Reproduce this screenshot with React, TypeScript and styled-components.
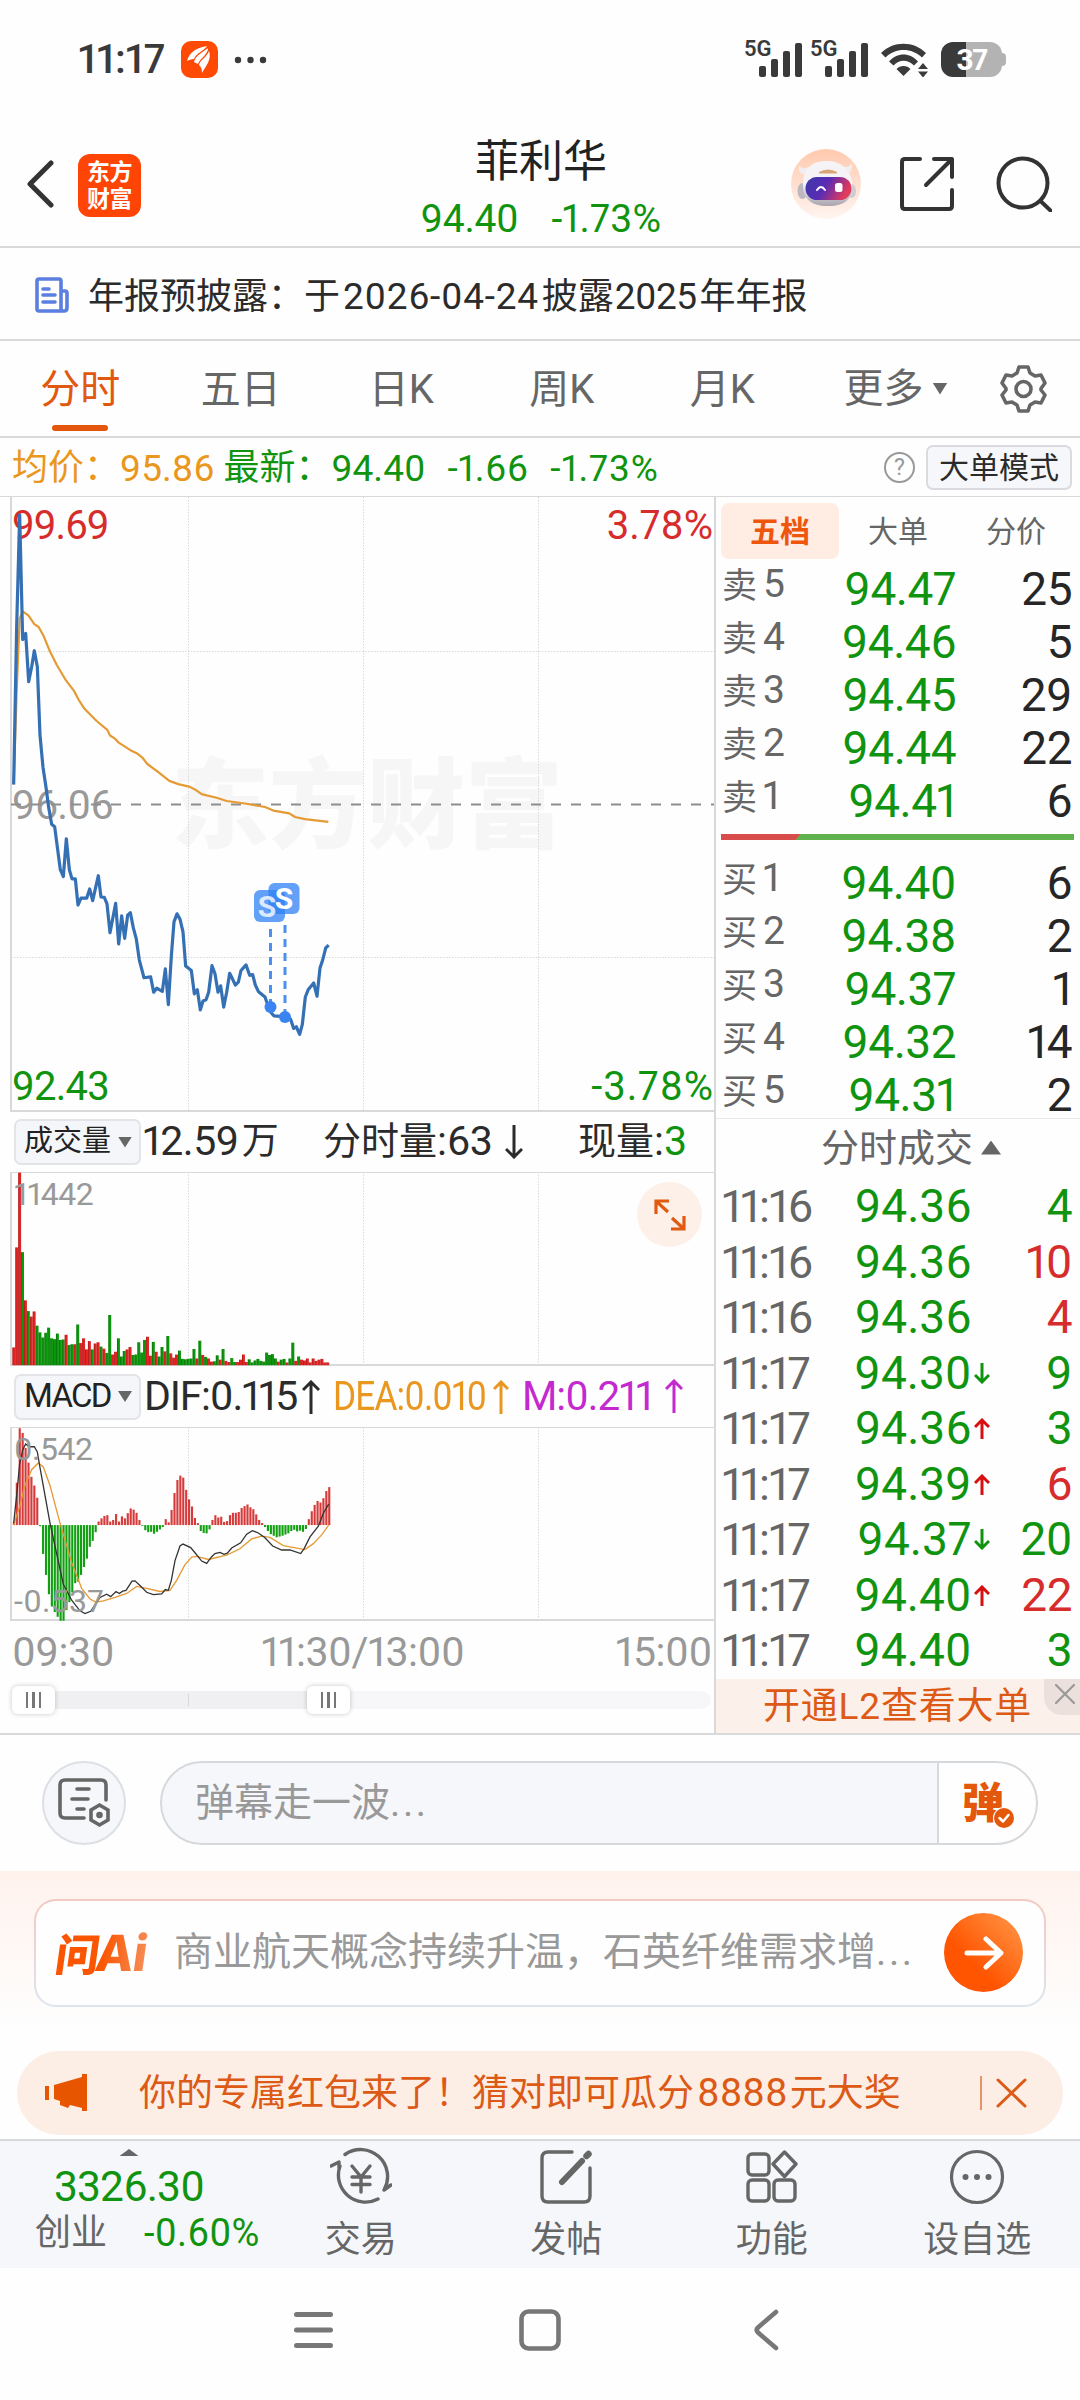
import React from "react";
import styled, { createGlobalStyle } from "styled-components";

const GREEN = "#109410";
const RED = "#d62c2c";
const INK = "#2b2b2b";
const GRAY = "#666666";
const MUTED = "#999999";
const ORANGE = "#e0590f";
const AMBER = "#ea9720";
const PURPLE = "#c429cf";
const LINE = "#d8d9db";

const Global = createGlobalStyle`
  * { box-sizing: border-box; }
  body { margin: 0; background: #fefefe; }
  svg { display: block; flex: none; }
`;

const Screen = styled.div`
  width: 1080px;
  height: 2400px;
  overflow: hidden;
  display: flex;
  flex-direction: column;
  background: #fefefe;
  color: ${INK};
  font-family: Roboto, "Noto Sans CJK SC", sans-serif;
  font-feature-settings: "pnum" 1;
  white-space: nowrap;
`;

const Txt = styled.span<{ $s: number; $c?: string; $ls?: number; $w?: number; $ml?: number; $sx?: number }>`
  font-size: ${(p) => p.$s}px;
  color: ${(p) => p.$c ?? "inherit"};
  letter-spacing: ${(p) => p.$ls ?? 0}px;
  font-weight: ${(p) => p.$w ?? 400};
  margin-left: ${(p) => p.$ml ?? 0}px;
  line-height: 1.1;
  ${(p) => p.$sx && `display: inline-block; transform: scaleX(${p.$sx}); transform-origin: left center; margin-right: -30px;`}
`;
const Dots = styled.span`
  letter-spacing: 2.6px;
`;

/* ---------- status bar ---------- */
const StatusBar = styled.div`
  height: 119px;
  display: flex;
  align-items: center;
  padding: 0 78px 0 78px;
  color: #3a3a3a;
`;
const Push = styled.div<{ $w?: number }>`
  flex: ${(p) => (p.$w ? `0 0 ${p.$w}px` : "1")};
`;
const AppBadge = styled.div`
  width: 37px;
  height: 37px;
  margin-left: 16px;
  border-radius: 10px;
  background: #ff4a05;
  display: flex;
  align-items: center;
  justify-content: center;
`;
const Signal = styled.div`
  display: flex;
  width: 66px;
  height: 40px;
`;
const Net = styled.span`
  width: 15px;
  font-size: 22px;
  line-height: 17px;
  font-weight: 600;
`;
const Battery = styled.div`
  position: relative;
  width: 61px;
  height: 35px;
  margin-left: 12px;
  border-radius: 12px;
  background: linear-gradient(90deg, #3a3a3a 25px, #b3b3b3 25px);
  color: #fff;
  font-size: 30px;
  font-weight: 700;
  line-height: 36px;
  text-align: center;
  letter-spacing: -1.5px;
  &::after {
    content: "";
    position: absolute;
    right: -4px;
    top: 11px;
    width: 4px;
    height: 13px;
    border-radius: 0 4px 4px 0;
    background: #b3b3b3;
  }
`;

/* ---------- header ---------- */
const Header = styled.header`
  height: 129px;
  border-bottom: 2px solid ${LINE};
  display: grid;
  grid-template-columns: 26px 52px 64px 1fr 70px 39px 54px 42px 54px 30px;
  align-items: center;
  padding-top: 2px;
`;
const Logo = styled.div`
  width: 63px;
  height: 63px;
  margin-top: 3px;
  border-radius: 12px;
  background: #ff4505;
  color: #fff;
  font-weight: 700;
  font-size: 23px;
  line-height: 27px;
  text-align: center;
  padding-top: 5px;
  letter-spacing: -0.5px;
`;
const TitleBox = styled.div`
  display: flex;
  flex-direction: column;
  align-items: center;
  width: 250px;
  margin-left: 274px;
  padding-top: 12px;
`;
const Quote = styled.div`
  display: flex;
  gap: 33px;
  margin-top: 12px;
`;

/* ---------- notice / tabs / info ---------- */
const Notice = styled.div`
  height: 93px;
  border-bottom: 2px solid ${LINE};
  display: flex;
  align-items: center;
  padding: 8px 0 0 35px;
`;
const NoticeIcon = styled.div`
  margin-top: -6px;
`;
const Tabs = styled.nav`
  height: 97px;
  border-bottom: 2px solid ${LINE};
  display: grid;
  grid-template-columns: repeat(5, 160.5px) 41px 156px 47px;
  align-items: stretch;
`;
const Tab = styled.div<{ $on?: boolean }>`
  display: flex;
  flex-direction: column;
  align-items: center;
  padding-top: 24px;
  font-size: 40px;
  line-height: 50px;
  color: ${(p) => (p.$on ? ORANGE : GRAY)};
  &::after {
    content: "";
    width: 56px;
    height: 6px;
    margin-top: 10px;
    border-radius: 3px;
    background: ${(p) => (p.$on ? "#e4560b" : "transparent")};
  }
`;
const More = styled.div`
  grid-column: 7;
  display: flex;
  align-items: center;
  gap: 9px;
  font-size: 40px;
  line-height: 50px;
  color: ${GRAY};
`;
const Tri = styled.i<{ $w: number; $h: number; $up?: boolean; $c?: string }>`
  display: block;
  width: ${(p) => p.$w}px;
  height: ${(p) => p.$h}px;
  background: ${(p) => p.$c ?? GRAY};
  clip-path: ${(p) => (p.$up ? "polygon(50% 0, 100% 100%, 0 100%)" : "polygon(0 0, 100% 0, 50% 100%)")};
`;
const GearBox = styled.div`
  display: flex;
  align-items: center;
`;
const Info = styled.div`
  height: 59px;
  border-bottom: 1px solid ${LINE};
  display: flex;
  align-items: center;
  padding: 0 8px 0 12px;
`;
const InfoText = styled.div`
  display: flex;
  align-items: center;
  padding-top: 4px;
`;
const Help = styled.div`
  width: 31px;
  height: 31px;
  margin-right: 11px;
  border: 2px solid ${MUTED};
  border-radius: 50%;
  color: ${MUTED};
  font-size: 23px;
  line-height: 27px;
  text-align: center;
`;
const ModeButton = styled.div`
  width: 146px;
  height: 45px;
  border: 2px solid #d9dbdf;
  border-radius: 7px;
  background: #f6f7fa;
  font-size: 30px;
  line-height: 42px;
  text-align: center;
`;

/* ---------- main ---------- */
const Main = styled.main`
  display: grid;
  grid-template-columns: 716px 364px;
  height: 1238px;
  border-bottom: 2px solid ${LINE};
`;
const Left = styled.section`
  border-right: 2px solid ${LINE};
  display: flex;
  flex-direction: column;
`;
const Plot = styled.div<{ $h: number }>`
  position: relative;
  height: ${(p) => p.$h}px;
`;
const PlotSvg = styled.svg`
  position: relative;
`;
const Tag = styled.span<{ $x?: number; $r?: number; $y: number; $s: number; $c: string; $ls?: number }>`
  position: absolute;
  ${(p) => (p.$r === undefined ? `left: ${p.$x}px;` : `right: ${p.$r}px;`)}
  top: ${(p) => p.$y}px;
  font-size: ${(p) => p.$s}px;
  line-height: 1;
  color: ${(p) => p.$c};
  letter-spacing: ${(p) => p.$ls ?? -0.5}px;
`;
const Watermark = styled.span`
  position: absolute;
  left: 171px;
  top: 244px;
  font-family: "Noto Sans CJK SC", sans-serif;
  font-size: 98px;
  font-weight: 900;
  line-height: 112px;
  color: #f6f6f6;
`;
const IndicatorRow = styled.div<{ $h: number; $cols: string }>`
  height: ${(p) => p.$h}px;
  display: grid;
  grid-template-columns: ${(p) => p.$cols};
  align-items: center;
  padding-left: 14px;
`;
const Picker = styled.div`
  width: 127px;
  height: 46px;
  border: 2px solid #e3e4e8;
  border-radius: 7px;
  background: #f5f6f9;
  display: flex;
  align-items: center;
  justify-content: space-between;
  padding: 0 7px 0 8px;
  color: #222;
`;
const Cell = styled.div<{ $c?: string }>`
  display: flex;
  align-items: center;
  color: ${(p) => p.$c ?? INK};
`;
const Expand = styled.div`
  position: absolute;
  left: 637px;
  top: 10px;
  width: 65px;
  height: 65px;
  border-radius: 50%;
  background: #fdf0e9;
  display: flex;
  align-items: center;
  justify-content: center;
`;
const Axis = styled.div`
  height: 60px;
  display: flex;
  justify-content: space-between;
  align-items: center;
  padding: 1px 2px 0 12px;
  color: ${MUTED};
  font-size: 41px;
  letter-spacing: -0.4px;
`;
const AxisMid = styled.span`
  margin-left: -4px;
`;
const Slider = styled.div`
  position: relative;
  height: 18px;
  margin: 10px 3px 0 12px;
  border-radius: 9px;
  background: linear-gradient(90deg, #f0f0f3 320px, #f7f7fa 320px);
`;
const Tick = styled.div`
  width: 1px;
  height: 12px;
  position: absolute;
  top: 3px;
  left: 176px;
  background: ${LINE};
`;
const Knob = styled.div<{ $x: number }>`
  position: absolute;
  left: ${(p) => p.$x}px;
  top: -5px;
  width: 43px;
  height: 28px;
  border-radius: 6px;
  background: #fff;
  box-shadow: 0 0 5px rgba(0, 0, 0, 0.22);
  display: flex;
  gap: 4px;
  align-items: center;
  justify-content: center;
`;
const Bar = styled.i`
  width: 2.5px;
  height: 16px;
  background: #777;
`;

/* ---------- order book ---------- */
const Right = styled.section`
  display: flex;
  flex-direction: column;
`;
const BookTabs = styled.div`
  display: grid;
  grid-template-columns: repeat(3, 118px);
  padding: 6px 0 0 5px;
  height: 66px;
`;
const BookTab = styled.div<{ $on?: boolean }>`
  height: 56px;
  border-radius: 8px;
  background: ${(p) => (p.$on ? "#ffece3" : "transparent")};
  color: ${(p) => (p.$on ? "#ee560c" : GRAY)};
  font-weight: ${(p) => (p.$on ? 700 : 400)};
  font-size: 30px;
  line-height: 57px;
  text-align: center;
`;
const BookRow = styled.div`
  height: 53px;
  display: grid;
  grid-template-columns: 90px 144px 116px;
  padding-left: 6px;
  line-height: 53px;
`;
const Side = styled.div`
  display: flex;
  gap: 6px;
  color: ${GRAY};
  font-size: 35px;
  line-height: 48px;
`;
const Num = styled.div<{ $c?: string; $ls?: number }>`
  text-align: right;
  font-size: 46px;
  letter-spacing: ${(p) => p.$ls ?? -0.5}px;
  color: ${(p) => p.$c ?? "#262626"};
`;
const Ratio = styled.div`
  height: 6px;
  margin: 6px 6px 17px 5px;
  background: linear-gradient(128deg, #d94c4c 62px, #5fb24e 63px);
`;
const TradesHead = styled.div`
  height: 61px;
  margin-top: -4px;
  border-top: 1px solid #e6e7e9;
  display: flex;
  align-items: center;
  gap: 8px;
  padding: 0 0 3px 105px;
  font-size: 38px;
  line-height: 50px;
  color: ${GRAY};
`;
const TradeRow = styled.div`
  height: 55.5px;
  line-height: 55.5px;
  display: grid;
  grid-template-columns: 98px 151.5px 18.5px 82px;
  padding-left: 6px;
  align-items: center;
`;
const TimeCell = styled.div`
  font-size: 45px;
  letter-spacing: -1px;
  color: ${GRAY};
`;
const L2 = styled.div`
  position: relative;
  height: 54px;
  background: #fcf0ea;
  color: #dc5a16;
  font-size: 37px;
  letter-spacing: 0.8px;
  line-height: 55px;
  padding-left: 47px;
`;
const L2Close = styled.div`
  position: absolute;
  right: 0;
  top: 0;
  width: 36px;
  height: 36px;
  border-radius: 0 0 0 18px;
  background: #ebe0db;
  padding: 5px 0 0 11px;
`;

/* ---------- comment bar ---------- */
const Comment = styled.div`
  height: 136px;
  display: flex;
  align-items: center;
  padding: 0 42px;
  gap: 34px;
`;
const RoundBtn = styled.div`
  width: 84px;
  height: 84px;
  border-radius: 50%;
  border: 2px solid #dcdfe4;
  background: #f6f7fa;
  display: flex;
  align-items: center;
  justify-content: center;
`;
const Input = styled.div`
  width: 878px;
  height: 84px;
  border-radius: 42px;
  border: 2px solid #d6d9dc;
  background: linear-gradient(90deg, #f6f7fa 775px, ${LINE} 775px, ${LINE} 777px, #fefefe 777px);
  display: flex;
  align-items: center;
  justify-content: space-between;
  padding: 0 18px 0 33px;
`;
const DanIcon = styled.div`
  position: relative;
  width: 56px;
  height: 56px;
  font-family: "Noto Sans CJK SC", sans-serif;
  font-size: 42px;
  font-weight: 900;
  line-height: 49px;
  color: #e4580c;
`;
const DanCheck = styled.div`
  position: absolute;
  right: 3px;
  bottom: 2px;
  border-radius: 50%;
  background: #fefefe;
`;

/* ---------- AI ---------- */
const AiArea = styled.div`
  height: 180px;
  padding: 28px 34px 0;
  background: linear-gradient(180deg, #fff2ed, #fefefe 160px);
`;
const AiCard = styled.div`
  height: 108px;
  border-radius: 22px;
  border: 2px solid transparent;
  background: linear-gradient(#fefefe, #fefefe) padding-box,
    linear-gradient(180deg, #f3c9c1, #dde5ef) border-box;
  display: grid;
  grid-template-columns: 118px 1fr 79px;
  align-items: center;
  padding: 0 21px 1px 20px;
`;
const AiLogo = styled.div`
  transform: skewX(-8deg);
  transform-origin: left center;
  width: 100px;
  font-family: "Noto Sans CJK SC", sans-serif;
  font-weight: 900;
  font-size: 44px;
  line-height: 50px;
  background: linear-gradient(90deg, #fa5500 45px, #f7925f 96px);
  background-clip: text;
  -webkit-background-clip: text;
  color: transparent;
`;
const AiLatin = styled.span`
  font-family: Inter, sans-serif;
  font-weight: 800;
  font-size: 50px;
  letter-spacing: -1px;
  margin-left: -4px;
`;
const Go = styled.div`
  width: 79px;
  height: 79px;
  border-radius: 50%;
  background: linear-gradient(45deg, #ff5400 35%, #ff9a4a);
  display: flex;
  align-items: center;
  justify-content: center;
`;

/* ---------- promo ---------- */
const Promo = styled.div`
  height: 84px;
  margin: 0 17px 4px;
  border-radius: 42px;
  background: #fceee5;
  color: #dc5a16;
  display: grid;
  grid-template-columns: 94px 1fr 16px 31px;
  align-items: center;
  padding: 0 36px 0 28px;
`;
const Sep = styled.div`
  width: 1.5px;
  height: 34px;
  background: #e39468;
`;

/* ---------- bottom nav ---------- */
const Dock = styled.div`
  height: 129px;
  border-top: 2px solid ${LINE};
  background: #f6f7fa;
  display: grid;
  grid-template-columns: 258px repeat(4, 205.5px);
`;
const Index = styled.div`
  display: flex;
  flex-direction: column;
  align-items: center;
  padding-top: 8px;
`;
const IndexValue = styled.div`
  margin-top: 7px;
  font-size: 42.5px;
  letter-spacing: -0.8px;
  line-height: 48px;
  color: ${GREEN};
`;
const IndexSub = styled.div`
  display: flex;
  align-items: center;
  align-self: flex-start;
  margin-top: 2px;
  padding-left: 35px;
`;
const DockItem = styled.div`
  display: flex;
  flex-direction: column;
  align-items: center;
  padding-top: 6px;
  font-size: 36px;
  line-height: 46px;
  color: ${GRAY};
  gap: 10px;
`;
const SysNav = styled.div`
  flex: 1;
  display: grid;
  grid-template-columns: 39px 42px 25px;
  column-gap: 186px;
  padding: 41px 0 0 294px;
`;
const BackSlot = styled.div`
  padding-left: 6px;
`;

/* ---------- icons ---------- */
const Glyph = ({ w, h, sw = 4, c = GRAY, children }: { w: number; h: number; sw?: number; c?: string; children: React.ReactNode }) => (
  <svg width={w} height={h} viewBox={`0 0 ${w} ${h}`} fill="none" stroke={c} strokeWidth={sw} strokeLinecap="round" strokeLinejoin="round">
    {children}
  </svg>
);

const SignalIcon = () => (
  <Signal>
    <Net>5G</Net>
    <svg width="44" height="38" viewBox="0 0 44 38" fill="#3a3a3a">
      <rect x="0" y="26" width="7" height="11" rx="2" />
      <rect x="12" y="19" width="7" height="18" rx="2" />
      <rect x="24" y="11" width="7" height="26" rx="2" />
      <rect x="36" y="3" width="7" height="34" rx="2" />
    </svg>
  </Signal>
);

const WifiIcon = () => (
  <svg width="48" height="34" viewBox="0 0 48 34" fill="#3a3a3a">
    <path d="M0 10C12-2.500 33-2.500 45 10L41 14.500C31 4.500 14 4.500 4.500 14.500Z" />
    <path d="M8 18.500C16 9 29 9 37 18.500L33 22.500C27 16 18 16 12.500 22.500Z" />
    <path d="M15.500 26C19 22 26 22 29.500 26L22.500 33Z" />
    <path d="M42 20L47 26H37Z M42 34.500L47 28.500H37Z" />
  </svg>
);

const Robot = () => (
  <svg width="70" height="70" viewBox="0 0 70 70">
    <defs>
      <linearGradient id="rb" x1="0" y1="0" x2="0" y2="1">
        <stop offset="0" stopColor="#ffc9ae" />
        <stop offset="1" stopColor="#fff5f0" />
      </linearGradient>
      <linearGradient id="vz" x1="0" y1="0" x2="1" y2="0.300">
        <stop offset="0" stopColor="#3a3ba8" />
        <stop offset="0.500" stopColor="#5a2bb4" />
        <stop offset="1" stopColor="#e03a5c" />
      </linearGradient>
      <linearGradient id="hd" x1="0" y1="0" x2="0" y2="1">
        <stop offset="0.500" stopColor="#f6f3f6" />
        <stop offset="1" stopColor="#a9a4ae" />
      </linearGradient>
    </defs>
    <circle cx="35" cy="35" r="35" fill="url(#rb)" />
    <path d="M8 16C7 24 11 27 16 24L20 17C14 20 10 20 8 16ZM61 14C62 22 58 26 54 24L49 17C55 19 59 18 61 14Z" fill="#f1edf0" />
    <ellipse cx="11.500" cy="42" rx="5" ry="8" fill="#bcb8c1" />
    <ellipse cx="61" cy="42" rx="4" ry="7" fill="#cfcbd2" />
    <path d="M12 33C13 18 22 12 36 12S59 20 61 33C63 49 55 57 37 57S11 49 12 33Z" fill="url(#hd)" />
    <path d="M28 23Q37 18 46 23V24.500H28Z" fill="#d8a577" />
    <rect x="14.500" y="28" width="46" height="23" rx="11.500" fill="url(#vz)" />
    <path d="M26 41Q30 35 34 41" stroke="#fff" strokeWidth="2" fill="none" strokeLinecap="round" />
    <rect x="44" y="34" width="7.500" height="9" rx="2.500" fill="#fff" />
  </svg>
);

const Arrow = ({ up, c, w = 18, h = 34, sw = 3 }: { up?: boolean; c: string; w?: number; h?: number; sw?: number }) => (
  <svg width={w} height={h} viewBox={`0 0 ${w} ${h}`} fill="none" stroke={c} strokeWidth={sw}>
    {up ? (
      <path d={`M${w / 2} ${h}V2M1 ${w / 2 + 1}L${w / 2} 2L${w - 1} ${w / 2 + 1}`} />
    ) : (
      <path d={`M${w / 2} 0V${h - 2}M1 ${h - w / 2 - 1}L${w / 2} ${h - 2}L${w - 1} ${h - w / 2 - 1}`} />
    )}
  </svg>
);

/* ---------- chart data ---------- */
const price =
  "41,733 50,340 59,62 68,372 77,357 86,477 95,440 103,400 112,440 120,610 129,690 138,740 146,790 155,832 164,838 173,895 181,945 190,962 199,868 208,945 216,968 226,968 234,1033 243,1016 260,1016 269,993 278,1022 295,960 303,1013 313,1014 321,1030 330,1102 347,1029 356,1130 365,1060 374,1116 383,1058 391,1052 400,1090 409,1118 418,1170 432,1214 452,1212 461,1250 470,1240 487,1248 496,1192 505,1281 514,1160 522,1075 531,1055 540,1068 549,1100 557,1185 574,1196 583,1254 592,1244 601,1294 609,1272 618,1269 626,1250 636,1184 645,1204 654,1250 662,1234 671,1287 680,1250 689,1203 697,1216 706,1232 715,1225 723,1196 738,1182 749,1208 758,1206 766,1232 775,1248 795,1262 810,1298 822,1309 840,1310 862,1305 872,1318 881,1340 889,1336 899,1355 907,1330 916,1262 925,1243 941,1227 951,1260 960,1190 968,1170 977,1140 986,1133";
const average =
  "41,733 50,500 59,320 68,302 85,312 103,334 116,341 130,362 150,402 170,435 198,474 222,500 236,522 252,543 290,575 322,597 330,611 345,619 355,628 390,647 410,655 428,667 442,682 475,702 508,724 535,732 570,739 590,748 605,757 650,766 680,774 740,781 795,789 820,798 868,805 885,814 915,819 985,826";
const dif =
  "41,1070 50,1000 59,920 68,885 77,870 88,877 103,877 112,890 120,930 150,1070 190,1225 215,1265 240,1292 255,1299 272,1293 300,1258 320,1250 332,1256 348,1243 358,1248 368,1242 378,1240 396,1217 405,1216 420,1228 440,1245 460,1251 485,1249 496,1238 505,1240 514,1215 525,1165 540,1128 549,1123 572,1132 585,1145 605,1166 620,1172 635,1155 645,1147 660,1144 672,1149 682,1146 695,1133 722,1120 740,1098 757,1089 775,1095 795,1107 818,1128 845,1138 870,1138 902,1147 912,1135 930,1105 955,1078 970,1045 986,1022";
const dea =
  "41,1075 59,1028 75,975 95,935 115,918 130,928 150,975 180,1070 215,1170 245,1235 270,1262 288,1270 310,1267 345,1258 380,1248 410,1230 440,1235 480,1243 510,1240 530,1215 555,1175 575,1156 590,1154 625,1162 680,1151 720,1135 755,1110 785,1103 810,1106 850,1127 915,1137 940,1122 965,1100 986,1075";
const volume =
  "627R 374R 185R 386G 508R 535G 549R 536R 572G 589G 602G 590G 577G 604G 606G 592G 608G 607G 595R 621G 619G 619R 569G 616R 604R 632R 611R 632G 617R 614R 625G 630R 641G 545G 645R 638R 604G 650G 636G 632R 626R 646G 645G 614G 640G 608G 600R 648R 613G 638R 650G 626G 637R 598G 642R 653R 645R 635G 656G 657G 656G 655G 631G 655R 610G 646R 651G 655R 663R 662G 647G 658R 631G 661R 664R 654G 664G 664R 658R 645R 664R 657G 665G 660G 656G 661G 663G 640G 646G 644G 655G 663R 658G 656G 665R 655G 615G 661R 650G 658R 660R 655R 665R 655R 661R 658R 656R 665R 665R".split(" ");
const macd = [
  1068, 968, 830, 842, 880, 917, 953, 975, 1006, 1078, 1148, 1201, 1250, 1281, 1295, 1307, 1317, 1317, 1290, 1270, 1245, 1222, 1218, 1201, 1181, 1160, 1130, 1115,
  1093, 1066, 1058, 1052, 1050, 1066, 1062, 1047, 1066, 1053, 1058, 1045, 1033, 1036, 1044, 1062, 1077, 1088, 1093, 1092, 1097, 1092, 1086, 1080, 1060, 1068, 1037,
  994, 961, 950, 955, 986, 1010, 1028, 1057, 1070, 1090, 1095, 1096, 1086, 1062, 1050, 1056, 1054, 1067, 1065, 1050, 1044, 1044, 1042, 1032, 1027, 1023, 1030, 1035,
  1048, 1062, 1070, 1080, 1090, 1098, 1102, 1106, 1104, 1102, 1099, 1096, 1090, 1087, 1091, 1089, 1092, 1085, 1060, 1040, 1024, 1014, 1018, 1007, 989, 979,
];

const Frame = ({ h, rows = [] as number[] }: { h: number; rows?: number[] }) => (
  <g stroke={LINE} fill="none">
    <path d={`M714 ${h - 1}H11V0`} strokeWidth="2" />
    {[188.5, 363.5, 538.5].map((x) => (
      <path key={x} d={`M${x} 0V${h}`} strokeDasharray="1.500 1.500" />
    ))}
    {rows.map((y) => (
      <path key={y} d={`M11 ${y}H714`} strokeDasharray="1.500 1.500" />
    ))}
  </g>
);

const PriceChart = () => (
  <Plot $h={615}>
    <Watermark>东方财富</Watermark>
    <Tag $x={12} $y={9} $s={40} $c={RED} $ls={-1.1}>99.69</Tag>
    <Tag $r={1} $y={9} $s={40} $c={RED} $ls={0}>3.78%</Tag>
    <Tag $x={12} $y={288} $s={41} $c={MUTED} $ls={-0.8}>96.06</Tag>
    <Tag $x={12} $y={570} $s={40} $c={GREEN} $ls={-0.8}>92.43</Tag>
    <Tag $r={0} $y={570} $s={40} $c={GREEN} $ls={0.9}>-3.78%</Tag>
    <PlotSvg width="714" height="615" viewBox="0 0 714 615">
      <Frame h={615} rows={[154.5, 460.5]} />
      <path d="M11 307.500H714" stroke="#8d8d8d" strokeWidth="2" strokeDasharray="10 10" />
      <g transform="translate(0,-7) scale(0.33333,0.40177)" fill="none" strokeLinejoin="round">
        <polyline points={average} stroke="#e59a33" strokeWidth="2.200" vectorEffect="non-scaling-stroke" />
        <polyline points={price} stroke="#3570b5" strokeWidth="3.200" vectorEffect="non-scaling-stroke" />
      </g>
      <g stroke="#4c8ff2" strokeWidth="3" strokeDasharray="8 6">
        <path d="M270.500 432V508M285 428V516" />
      </g>
      <circle cx="270.500" cy="510" r="6" fill="#3a84f2" />
      <circle cx="285" cy="520" r="6" fill="#3a84f2" />
      <g fill="#2f80f5" fillOpacity="0.750">
        <rect x="254" y="393" width="31" height="32" rx="6" />
        <rect x="268.500" y="386" width="31" height="31" rx="6" />
      </g>
      <g fill="#fff" fontFamily="Roboto, sans-serif" fontWeight="700" fontSize="30" textAnchor="middle">
        <text x="267" y="420" fillOpacity="0.800">S</text>
        <text x="284" y="412">S</text>
      </g>
    </PlotSvg>
  </Plot>
);

const VolumeChart = () => (
  <Plot $h={194}>
    <svg width="714" height="194" viewBox="0 0 714 194">
      <path d="M11 0.500H714" stroke={LINE} />
      <Frame h={194} />
      <g transform="translate(0,-72.500) scale(0.33333,0.39541)">
        {volume.map((v, i) => {
          const top = parseInt(v, 10);
          return <rect key={i} x={37 + i * 8.72} y={top} width="8.900" height={672 - top} fill={v.endsWith("R") ? "#e32424" : "#0c970c"} />;
        })}
        {volume.map((v, i) => {
          const top = parseInt(v, 10);
          return <rect key={i} x={37 + i * 8.72} y={top} width="3" height={672 - top} fillOpacity="0.180" />;
        })}
      </g>
    </svg>
    <Tag $x={14} $y={6} $s={32} $c={MUTED}>11442</Tag>
    <Expand>
      <Glyph w={32} h={32} sw={3.2} c="#e05a10">
        <path strokeLinecap="butt" strokeLinejoin="miter" d="M2 15V2H15M2 2L14 13M30 17V30H17M30 30L18 19" />
      </Glyph>
    </Expand>
  </Plot>
);

const MacdChart = () => (
  <Plot $h={194}>
    <svg width="714" height="194" viewBox="0 0 714 194">
      <path d="M11 0.500H714" stroke={LINE} />
      <Frame h={194} />
      <g transform="translate(0,-327) scale(0.33333,0.39541)" fill="none">
        {macd.map((y, i) => (
          <rect key={i} x={38.5 + i * 8.76} y={Math.min(y, 1075)} width="6.400" height={Math.abs(y - 1075)} fill={y < 1075 ? "#d63a3a" : "#12a012"} />
        ))}
        <polyline points={dea} stroke="#e59a33" strokeWidth="1.300" vectorEffect="non-scaling-stroke" />
        <polyline points={dif} stroke="#333" strokeWidth="1.300" vectorEffect="non-scaling-stroke" />
      </g>
    </svg>
    <Tag $x={14} $y={6} $s={32} $c={MUTED}>0.542</Tag>
    <Tag $x={14} $y={158} $s={32} $c={MUTED} $ls={0.3}>-0.537</Tag>
  </Plot>
);

const asks = [["5", "94.47", "25"], ["4", "94.46", "5"], ["3", "94.45", "29"], ["2", "94.44", "22"], ["1", "94.41", "6"]];
const bids = [["1", "94.40", "6"], ["2", "94.38", "2"], ["3", "94.37", "1"], ["4", "94.32", "14"], ["5", "94.31", "2"]];
const trades: [string, string, number, string, string][] = [
  ["11:16", "94.36", 0, "4", GREEN],
  ["11:16", "94.36", 0, "10", RED],
  ["11:16", "94.36", 0, "4", RED],
  ["11:17", "94.30", -1, "9", GREEN],
  ["11:17", "94.36", 1, "3", GREEN],
  ["11:17", "94.39", 1, "6", RED],
  ["11:17", "94.37", -1, "20", GREEN],
  ["11:17", "94.40", 1, "22", RED],
  ["11:17", "94.40", 0, "3", GREEN],
];

const Level = ({ side, row }: { side: string; row: string[] }) => (
  <BookRow>
    <Side>
      {side}
      <Txt $s={39}>{row[0]}</Txt>
    </Side>
    <Num $c={GREEN}>{row[1]}</Num>
    <Num>{row[2]}</Num>
  </BookRow>
);

export default function App() {
  return (
    <Screen>
      <Global />
      <StatusBar>
        <Txt $s={41} $w={500} $ls={-0.4}>11:17</Txt>
        <AppBadge>
          <svg width="26" height="28" viewBox="0 0 26 28" fill="#fff">
            <path d="M1 15C3 8 8 2 21 0C18 5 10 7 8 13C5 13 3 14 1 15ZM8 16C10 9 16 7 22 2C22 9 14 12 12 18ZM13 19C14 14 21 11 23 5C26 13 20 20 16 27C16 23 15 21 13 19Z" />
          </svg>
        </AppBadge>
        <Glyph w={49} h={8} sw={0}>
          <g fill="#3a3a3a">
            <circle cx="20" cy="4" r="3.200" />
            <circle cx="32.500" cy="4" r="3.200" />
            <circle cx="45" cy="4" r="3.200" />
          </g>
        </Glyph>
        <Push />
        <SignalIcon />
        <SignalIcon />
        <Push $w={5} />
        <WifiIcon />
        <Battery>37</Battery>
      </StatusBar>

      <Header>
        <i />
        <Glyph w={28} h={48} sw={5} c="#333">
          <path d="M25 3L4 24L25 45" />
        </Glyph>
        <Logo>东方<br />财富</Logo>
        <TitleBox>
          <Txt $s={44} $c="#222">菲利华</Txt>
          <Quote>
            <Txt $s={39} $c={GREEN} $ls={-0.3}>94.40</Txt>
            <Txt $s={39} $c={GREEN} $ls={0.2}>-1.73%</Txt>
          </Quote>
        </TitleBox>
        <Robot />
        <i />
        <Glyph w={54} h={54} sw={4} c="#333">
          <path d="M20 2H5Q2 2 2 5V49Q2 52 5 52H49Q52 52 52 49V33M34 2H52V20M51 3L26 28" />
        </Glyph>
        <i />
        <Glyph w={56} h={56} sw={4} c="#333">
          <circle cx="27" cy="27" r="24.500" />
          <path d="M44.500 45L55 55" />
        </Glyph>
      </Header>

      <Notice>
        <NoticeIcon>
          <Glyph w={34} h={36} sw={3.6} c="#5a7fe0">
            <path d="M26 34V4Q26 2 24 2H4Q2 2 2 4V32Q2 34 4 34H29Q32 34 32 31V16Q32 14 30 14H26M8 12H14M8 18H20M8 25H20" />
          </Glyph>
        </NoticeIcon>
        <Txt $s={36} $ml={19}>年报预披露：于</Txt>
        <Txt $s={37} $ml={3} $ls={0.7}>2026-04-24</Txt>
        <Txt $s={36} $ml={3}>披露</Txt>
        <Txt $s={37} $ml={1} $ls={-0.5}>2025</Txt>
        <Txt $s={36} $ml={3}>年年报</Txt>
      </Notice>

      <Tabs>
        <Tab $on>分时</Tab>
        <Tab>五日</Tab>
        <Tab>日K</Tab>
        <Tab>周K</Tab>
        <Tab>月K</Tab>
        <More>
          更多
          <Tri $w={15} $h={12} />
        </More>
        <GearBox>
          <Glyph w={47} h={48} sw={3.6}>
            <path d="M19 2H28L30 8L35 11L41 10L45 18L41 23.500V25L45 30L41 38L35 37L30 40L28 46H19L17 40L12 37L6 38L2 30L6 25V23.500L2 18L6 10L12 11L17 8Z" />
            <circle cx="23.500" cy="24" r="7.500" />
          </Glyph>
        </GearBox>
      </Tabs>

      <Info>
        <InfoText>
          <Txt $s={36} $c={AMBER}>均价：</Txt>
          <Txt $s={37} $c={AMBER}>95.86</Txt>
          <Txt $s={36} $c={GREEN} $ml={9}>最新：</Txt>
          <Txt $s={37} $c={GREEN}>94.40</Txt>
          <Txt $s={37} $c={GREEN} $ml={22} $ls={0.5}>-1.66</Txt>
          <Txt $s={37} $c={GREEN} $ml={22} $ls={0.9}>-1.73%</Txt>
        </InfoText>
        <Push />
        <Help>?</Help>
        <ModeButton>大单模式</ModeButton>
      </Info>

      <Main>
        <Left>
          <PriceChart />
          <IndicatorRow $h={60} $cols="129px 180px 255px 1fr">
            <Picker>
              <Txt $s={29}>成交量</Txt>
              <Tri $w={14} $h={11} />
            </Picker>
            <Cell>
              <Txt $s={41} $ls={-0.5}>12.59</Txt>
              <Txt $s={37} $ml={3}>万</Txt>
            </Cell>
            <Cell>
              <Txt $s={38}>分时量</Txt>
              <Txt $s={41} $ls={-0.3}>:63</Txt>
              <Push $w={12} />
              <Arrow c={INK} />
            </Cell>
            <Cell>
              <Txt $s={38}>现量</Txt>
              <Txt $s={41}>:</Txt>
              <Txt $s={41} $c={GREEN}>3</Txt>
            </Cell>
          </IndicatorRow>
          <VolumeChart />
          <IndicatorRow $h={61} $cols="130px 189px 189px 1fr">
            <Picker>
              <Txt $s={33} $ls={-1.7}>MACD</Txt>
              <Tri $w={14} $h={11} />
            </Picker>
            <Cell>
              <Txt $s={41} $ls={-1.2}>DIF:0.115</Txt>
              <Push />
              <Arrow up c={INK} />
              <Push $w={13} />
            </Cell>
            <Cell $c={AMBER}>
              <Txt $s={41} $ls={-1} $sx={0.86}>DEA:0.010</Txt>
              <Push />
              <Arrow up c={AMBER} w={16} />
              <Push $w={13} />
            </Cell>
            <Cell $c={PURPLE}>
              <Txt $s={40.5} $ls={-1}>M:0.211</Txt>
              <Push $w={13} />
              <Arrow up c={PURPLE} />
            </Cell>
          </IndicatorRow>
          <MacdChart />
          <Axis>
            <span>09:30</span>
            <AxisMid>11:30/13:00</AxisMid>
            <span>15:00</span>
          </Axis>
          <Slider>
            <Tick />
            <Knob $x={0}><Bar /><Bar /><Bar /></Knob>
            <Knob $x={295}><Bar /><Bar /><Bar /></Knob>
          </Slider>
        </Left>
        <Right>
          <BookTabs>
            <BookTab $on>五档</BookTab>
            <BookTab>大单</BookTab>
            <BookTab>分价</BookTab>
          </BookTabs>
          {asks.map((r) => <Level key={r[0]} side="卖" row={r} />)}
          <Ratio />
          {bids.map((r) => <Level key={r[0]} side="买" row={r} />)}
          <TradesHead>
            分时成交
            <Tri $up $w={20} $h={14} />
          </TradesHead>
          {trades.map(([t, p, d, q, c], i) => (
            <TradeRow key={i}>
              <TimeCell>{t}</TimeCell>
              <Num $c={GREEN} $ls={0}>{p}</Num>
              <Cell>
                {d !== 0 && (
                  <>
                    <Push $w={2} />
                    <Arrow up={d > 0} c={d > 0 ? "#d60f0f" : GREEN} w={16} h={21} />
                  </>
                )}
              </Cell>
              <Num $c={c}>{q}</Num>
            </TradeRow>
          ))}
          <L2>
            开通L2查看大单
            <L2Close>
              <Glyph w={20} h={20} sw={2.2} c="#999">
                <path d="M1 1L19 19M19 1L1 19" />
              </Glyph>
            </L2Close>
          </L2>
        </Right>
      </Main>

      <Comment>
        <RoundBtn>
          <Glyph w={52} h={50} sw={3.6}>
            <path d="M26 40H7Q2 40 2 35V7Q2 2 7 2H43Q48 2 48 7V22M19 11H31M14 21H30M19 31H26" />
            <path strokeLinejoin="miter" d="M41.500 27L50 32V42L41.500 47L33 42V32Z" />
            <circle cx="41.500" cy="37" r="1.500" />
          </Glyph>
        </RoundBtn>
        <Input>
          <Txt $s={39} $c={MUTED}>弹幕走一波<Dots>...</Dots></Txt>
          <DanIcon>
            弹
            <DanCheck>
              <Glyph w={22} h={22} sw={2.5} c="#fff">
                <circle cx="11" cy="11" r="10" fill="#e4580c" stroke="none" />
                <path d="M6.500 11L10 14.500L15.500 8" />
              </Glyph>
            </DanCheck>
          </DanIcon>
        </Input>
      </Comment>

      <AiArea>
        <AiCard>
          <AiLogo>问<AiLatin>Ai</AiLatin></AiLogo>
          <Txt $s={39} $c={MUTED}>商业航天概念持续升温，石英纤维需求增<Dots>...</Dots></Txt>
          <Go>
            <Glyph w={40} h={34} sw={5} c="#fff">
              <path d="M3 17H36M22 3L37 17L22 31" />
            </Glyph>
          </Go>
        </AiCard>
      </AiArea>

      <Promo>
        <svg width="42" height="38" viewBox="0 0 42 38" fill="#e85500">
          <path d="M0 12H4V26H0ZM9 11L37 3V0H42V37H37V34L25 31L23 34L15 31V27L9 25Z" />
        </svg>
        <Txt $s={37}>你的专属红包来了！猜对即可瓜分<Txt $s={39} $ml={3}>8888</Txt><Txt $s={37} $ml={2}>元大奖</Txt></Txt>
        <Sep />
        <Glyph w={31} h={30} sw={3} c="#dc5a16">
          <path d="M2 2L29 28M29 2L2 28" />
        </Glyph>
      </Promo>

      <Dock>
        <Index>
          <Tri $up $w={19} $h={7} />
          <IndexValue>3326.30</IndexValue>
          <IndexSub>
            <Txt $s={36} $c={GRAY}>创业</Txt>
            <Txt $s={38} $c={GREEN} $ml={37} $ls={0.2}>-0.60%</Txt>
          </IndexSub>
        </Index>
        <DockItem>
          <Glyph w={62} h={60} sw={3.4}>
            <path d="M15 7.500A27 27 0 0 1 54 43L61 38M10 19A27 27 0 0 0 48 52M1 19L9 15V21" />
            <path d="M22 19L31 30L40 19M31 30V45M22 30H40M22 37.500H40" />
          </Glyph>
          交易
        </DockItem>
        <DockItem>
          <Glyph w={54} h={60} sw={3.4}>
            <path d="M33 5H9Q3 5 3 11V49Q3 55 9 55H45Q51 55 51 49V21" />
            <path d="M23 35L43 14" strokeWidth="6" />
            <path d="M47.500 9L49.500 7" strokeWidth="6.500" />
          </Glyph>
          发帖
        </DockItem>
        <DockItem>
          <Glyph w={52} h={60} sw={3.4}>
            <rect x="2" y="7" width="21" height="21" rx="4" />
            <rect x="2" y="33" width="21" height="21" rx="4" />
            <rect x="28" y="33" width="21" height="21" rx="4" />
            <path d="M38.500 5L50 17L38.500 29.500L27 17Z" />
          </Glyph>
          功能
        </DockItem>
        <DockItem>
          <Glyph w={56} h={60} sw={3.2}>
            <circle cx="28" cy="30" r="25.500" />
            <g fill={GRAY} stroke="none">
              <circle cx="16.500" cy="30" r="3" />
              <circle cx="28" cy="30" r="3" />
              <circle cx="39.500" cy="30" r="3" />
            </g>
          </Glyph>
          设自选
        </DockItem>
      </Dock>
      <SysNav>
        <Glyph w={39} h={42} sw={5} c="#777">
          <path d="M2.500 5.500H36.500M2.500 21H36.500M2.500 36.500H36.500" />
        </Glyph>
        <Glyph w={42} h={42} sw={4.6} c="#777">
          <rect x="2.500" y="2.500" width="37" height="37" rx="7" />
        </Glyph>
        <BackSlot>
          <Glyph w={26} h={42} sw={4.6} c="#777">
            <path d="M23 3L5 18.500Q2.500 21 5 23.500L23 39" />
          </Glyph>
        </BackSlot>
      </SysNav>
    </Screen>
  );
}
